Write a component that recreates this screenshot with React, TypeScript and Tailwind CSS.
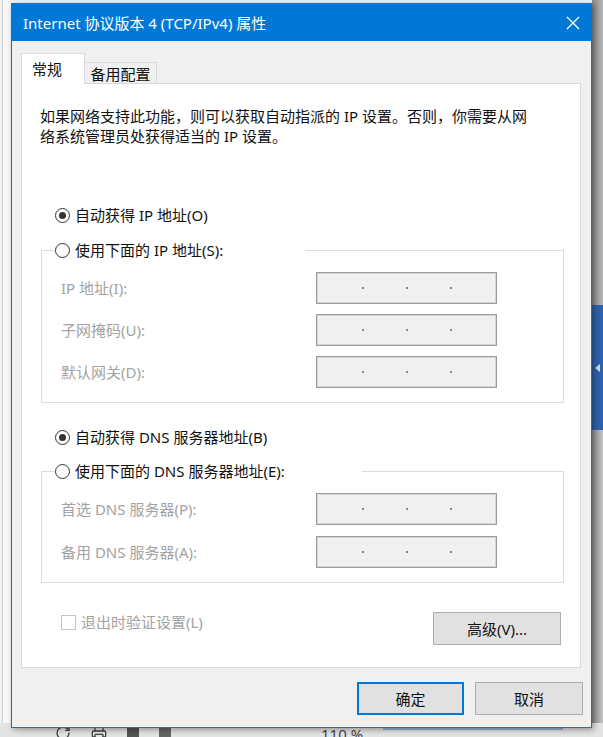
import { RotateCw, Printer } from "lucide-react";

function Radio({ checked }: { checked?: boolean }) {
  return (
    <span className="flex h-[15px] w-[15px] shrink-0 items-center justify-center rounded-full border border-[#333] bg-white">
      {checked && <span className="h-[7px] w-[7px] rounded-full bg-[#333]" />}
    </span>
  );
}

function IpBox() {
  return (
    <div className="flex h-[32px] w-[181px] items-center justify-center gap-[42px] border border-[#9b9b9b] bg-[#f0f0f0] shadow-[inset_0_0_0_1px_#d6d6d6]">
      <span className="h-[2px] w-[2px] bg-[#7d8aa3]" />
      <span className="h-[2px] w-[2px] bg-[#7d8aa3]" />
      <span className="h-[2px] w-[2px] bg-[#7d8aa3]" />
    </div>
  );
}

function Row({ label }: { label: string }) {
  return (
    <div className="flex items-center pl-[19px]">
      <span className="w-[255px] text-[#a3a3a3]">{label}</span>
      <IpBox />
    </div>
  );
}

function Group({ legend, width, rows }: { legend: string; width: string; rows: string[] }) {
  return (
    <fieldset className="ml-[19px] w-[523px] border border-[#dcdcdc] pb-[14px]">
      <legend className={`ml-[13px] flex h-[20px] items-center gap-[5px] ${width}`}>
        <Radio />
        <span className="whitespace-nowrap text-[#111]">{legend}</span>
      </legend>
      <div className={`mt-[12px] flex flex-col ${rows.length === 3 ? "gap-[10px]" : "gap-[11px]"}`}>
        {rows.map((r) => (
          <Row key={r} label={r} />
        ))}
      </div>
    </fieldset>
  );
}

export default function App() {
  return (
    <div className="relative h-[737px] w-[603px] overflow-hidden bg-[#f2f2f2] font-['Noto_Sans','Noto_Sans_CJK_SC',sans-serif] text-[15px] leading-[20px]">
      {/* page behind the dialog */}
      <div className="flex h-full flex-col">
        <div className="flex flex-1">
          <div className="flex w-[11px] flex-col">
            <div className="ml-[2px] flex-1 border-l border-[#cfcfcf] bg-[#f7f7f7]" />
          </div>
          <div className="flex-1" />
          <div className="flex w-[11px] flex-col">
            <div className="h-[305px] bg-gradient-to-r from-[#858585] to-[#b8b8b8]" />
            <div className="flex h-[125px] items-center bg-[#2d61a9] pl-[3px]">
              <span className="h-0 w-0 border-y-[4px] border-r-[5px] border-y-transparent border-r-[#d8d8d8]" />
            </div>
            <div className="flex-1 bg-gradient-to-r from-[#8d8d8d] to-[#c4c4c4]" />
          </div>
        </div>
        <div className="flex h-[14px] items-start gap-[20px] overflow-hidden bg-[#e4e4e4] pl-[55px] text-[#444]">
          <RotateCw size={16} className="mt-[2px]" />
          <Printer size={16} className="mt-[2px]" />
          <span className="mt-[3px] h-[14px] w-[12px] bg-[#555]" />
          <span className="mt-[3px] h-[14px] w-[12px] bg-[#666]" />
          <span className="ml-[130px] mt-[1px] whitespace-nowrap">110 %</span>
          <span className="mt-[5px] h-[2px] w-[180px] bg-[#9ab4d8]" />
        </div>
      </div>

      {/* dialog */}
      <div className="absolute left-[11px] top-[3px] flex h-[725px] w-[581px] flex-col border border-[#0078d7] bg-[#f0f0f0] shadow-[2px_2px_6px_rgba(0,0,0,0.35)]">
        <div className="flex h-[37px] shrink-0 items-center justify-between bg-[#0078d7] pl-[11px] pr-[11px] text-white">
          <span className="whitespace-nowrap">Internet 协议版本 4 (TCP/IPv4) 属性</span>
          <svg width="14" height="14" viewBox="0 0 14 14" fill="none" stroke="white" strokeWidth="1.3">
            <path d="M1 1L13 13M13 1L1 13" />
          </svg>
        </div>

        <div className="mt-[12px] flex items-end pl-[9px]">
          <div className="relative z-10 flex h-[31px] w-[64px] items-center border-l border-r border-t border-[#d9d9d9] bg-white pl-[10px] text-[#111]">
            常规
          </div>
          <div className="flex h-[22px] w-[72px] items-center justify-center border-r border-t border-[#d9d9d9] bg-[#f0f0f0] text-[#111]">
            备用配置
          </div>
        </div>

        <div className="-mt-px ml-[9px] flex h-[585px] w-[560px] flex-col border border-[#d9d9d9] bg-white">
          <p className="whitespace-nowrap pl-[18px] pt-[22px] text-[#111]">
            如果网络支持此功能，则可以获取自动指派的 IP 设置。否则，你需要从网
            <br />
            络系统管理员处获得适当的 IP 设置。
          </p>

          <div className="mt-[59px] flex h-[20px] items-center gap-[5px] pl-[33px] text-[#111]">
            <Radio checked />
            <span>自动获得 IP 地址(O)</span>
          </div>

          <div className="mt-[15px]">
            <Group legend="使用下面的 IP 地址(S):" width="w-[250px]" rows={["IP 地址(I):", "子网掩码(U):", "默认网关(D):"]} />
          </div>

          <div className="mt-[24px] flex h-[20px] items-center gap-[5px] pl-[33px] text-[#111]">
            <Radio checked />
            <span>自动获得 DNS 服务器地址(B)</span>
          </div>

          <div className="mt-[14px]">
            <Group legend="使用下面的 DNS 服务器地址(E):" width="w-[307px]" rows={["首选 DNS 服务器(P):", "备用 DNS 服务器(A):"]} />
          </div>

          <div className="mt-[29px] flex items-start justify-between pl-[39px] pr-[19px]">
            <label className="flex h-[20px] items-center gap-[5px] text-[#a3a3a3]">
              <span className="h-[15px] w-[15px] border border-[#c4c4c4] bg-white" />
              退出时验证设置(L)
            </label>
            <button className="flex h-[33px] w-[128px] items-center justify-center border border-[#adadad] bg-[#e1e1e1] text-[#111]">
              高级(V)...
            </button>
          </div>
        </div>

        <div className="mt-[14px] flex justify-end gap-[11px] pr-[8px]">
          <button className="flex h-[33px] w-[107px] items-center justify-center border-2 border-[#0078d7] bg-[#e1e1e1] text-[#111]">
            确定
          </button>
          <button className="flex h-[33px] w-[108px] items-center justify-center border border-[#adadad] bg-[#e1e1e1] text-[#111]">
            取消
          </button>
        </div>
      </div>
    </div>
  );
}
